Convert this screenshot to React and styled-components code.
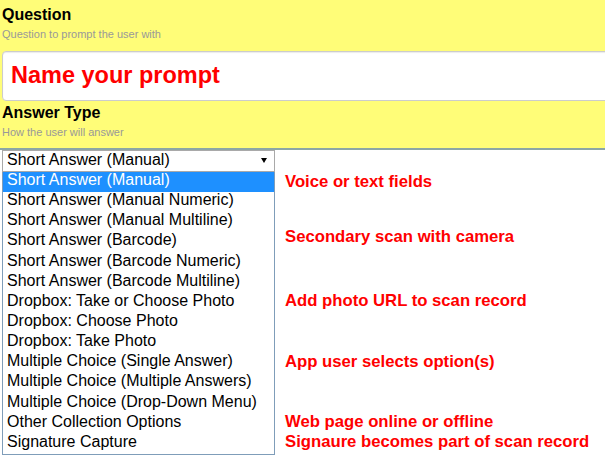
import React from 'react';
import styled, { createGlobalStyle } from 'styled-components';

const GlobalStyle = createGlobalStyle`
  body {
    margin: 0;
    background: #ffffff;
    font-family: "Liberation Sans", Arial, sans-serif;
  }
`

const Page = styled.div`
  width: 605px;
  height: 459px;
  overflow: hidden;
  background: #ffffff;
`

const Header = styled.div`
  box-sizing: border-box;
  height: 150px;
  padding: 6px 0 0 2px;
  background: #fffd78;
  border-bottom: 2px solid #8ca6a6;
`

const FieldLabel = styled.div`
  font-size: 16px;
  font-weight: bold;
  line-height: 18px;
  color: #000;
  margin-top: ${p => p.$top || 0}px;
`

const FieldHint = styled.div`
  font-size: 11px;
  line-height: 13px;
  color: #999999;
  margin-top: 4px;
`

const PromptInput = styled.input`
  display: block;
  box-sizing: border-box;
  width: calc(100% + 10px);
  height: 50px;
  margin-top: 10px;
  padding: 0 8px 2px;
  border: 1px solid #cccccc;
  border-radius: 4px;
  box-shadow: inset 0 1px 1px rgba(0, 0, 0, 0.08);
  background: #ffffff;
  font-family: "Liberation Sans", Arial, sans-serif;
  font-size: 23.5px;
  font-weight: bold;
  color: #ff0000;
  outline: none;
`

const Body = styled.div`
  display: flex;
`

const Picker = styled.div`
  width: 273px;
  margin-left: 2px;
  flex-shrink: 0;
`

const SelectBox = styled.div`
  box-sizing: border-box;
  height: 22px;
  display: flex;
  align-items: flex-start;
  padding-left: 4px;
  border: 1px solid #a9a9a9;
  font-size: 16px;
  line-height: 18px;
  color: #000;
`

const Arrow = styled.svg`
  margin: 7px 7px 0 auto;
`

const OptionList = styled.div`
  border: 1px solid #7f9db9;
  border-top: 0;
`

const Option = styled.div`
  box-sizing: border-box;
  height: 20.15px;
  padding: 0 4px;
  font-size: 16px;
  line-height: 16px;
  white-space: nowrap;
  color: ${p => (p.$active ? '#ffffff' : '#000000')};
  background: ${p => (p.$active ? '#1e90ff' : 'transparent')};
`

const Notes = styled.div`
  display: grid;
  grid-template-rows: repeat(14, 20.15px);
  margin-top: 22px;
  padding-left: 10px;
`

const Note = styled.div`
  grid-row: ${p => p.$row + 1};
  font-size: 16.7px;
  font-weight: bold;
  line-height: 16px;
  color: #ff0000;
  white-space: nowrap;
  transform: translateY(${p => p.$nudge || 0}px);
`

const options = [
  'Short Answer (Manual)',
  'Short Answer (Manual Numeric)',
  'Short Answer (Manual Multiline)',
  'Short Answer (Barcode)',
  'Short Answer (Barcode Numeric)',
  'Short Answer (Barcode Multiline)',
  'Dropbox: Take or Choose Photo',
  'Dropbox: Choose Photo',
  'Dropbox: Take Photo',
  'Multiple Choice (Single Answer)',
  'Multiple Choice (Multiple Answers)',
  'Multiple Choice (Drop-Down Menu)',
  'Other Collection Options',
  'Signature Capture',
]

const notes = [
  { row: 0, text: 'Voice or text fields', nudge: 1.5 },
  { row: 3, text: 'Secondary scan with camera', nudge: -3.5 },
  { row: 6, text: 'Add photo URL to scan record' },
  { row: 9, text: 'App user selects option(s)', nudge: 1 },
  { row: 12, text: 'Web page online or offline' },
  { row: 13, text: 'Signaure becomes part of scan record' },
]

const App = () => {
  return (
    <>
      <GlobalStyle />
      <Page>
        <Header>
          <FieldLabel>Question</FieldLabel>
          <FieldHint>Question to prompt the user with</FieldHint>
          <PromptInput readOnly value="Name your prompt" />
          <FieldLabel $top={3}>Answer Type</FieldLabel>
          <FieldHint>How the user will answer</FieldHint>
        </Header>
        <Body>
          <Picker>
            <SelectBox>
              Short Answer (Manual)
              <Arrow width="6" height="5" viewBox="0 0 6 5">
                <polygon points="0,0 6,0 3,5" fill="#000" />
              </Arrow>
            </SelectBox>
            <OptionList>
              {options.map((o, i) => (
                <Option key={o} $active={i === 0}>{o}</Option>
              ))}
            </OptionList>
          </Picker>
          <Notes>
            {notes.map(n => (
              <Note key={n.text} $row={n.row} $nudge={n.nudge}>{n.text}</Note>
            ))}
          </Notes>
        </Body>
      </Page>
    </>
  )
}

export default App
